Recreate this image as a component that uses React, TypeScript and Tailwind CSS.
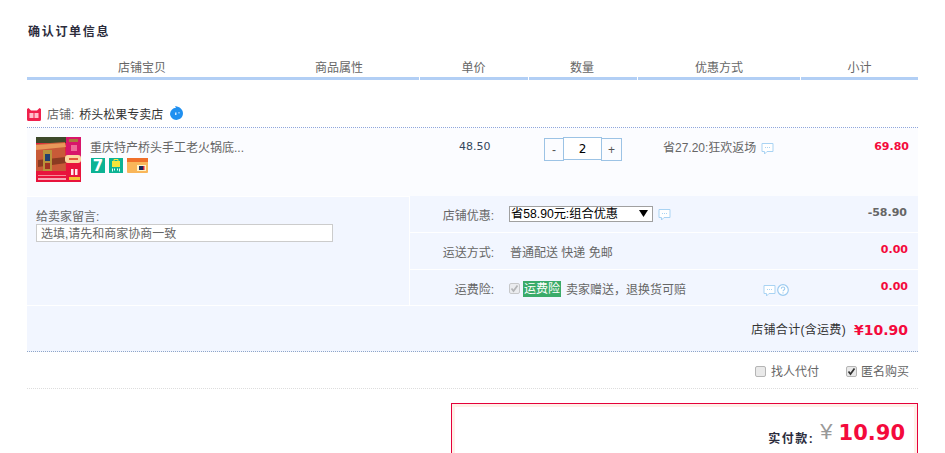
import React from "react";

const cjk = "font-['Liberation_Sans','Noto_Sans_CJK_SC',sans-serif]";
const num = "font-['DejaVu_Sans','Noto_Sans_CJK_SC',sans-serif]";

function Bubble() {
  return (
    <svg width="13" height="13" viewBox="0 0 13 13" className="shrink-0">
      <path d="M1 1.5h11v8H6L3.5 12V9.500H1z" fill="#fff" stroke="#a9d3f3" strokeWidth="1" />
      <path d="M4 5.500h1M6 5.500h1M8 5.500h1" stroke="#a9d3f3" strokeWidth="1" />
    </svg>
  );
}

function Help() {
  return (
    <svg width="12" height="12" viewBox="0 0 12 12" className="shrink-0">
      <circle cx="6" cy="6" r="5.300" fill="#fff" stroke="#9dcbf0" strokeWidth="1.200" />
      <path d="M4.300 4.700c0-2.200 3.500-2.200 3.500 0 0 1.200-1.800 1.300-1.800 2.600M6 8.300v1.200" fill="none" stroke="#9dcbf0" strokeWidth="1.100" />
    </svg>
  );
}

function Check({ checked, dim }: { checked?: boolean; dim?: boolean }) {
  return (
    <span className={`flex h-[11px] w-[11px] shrink-0 items-center justify-center rounded-[2px] border border-[#b5b5b5] bg-[#e9e9e9] ${dim ? "opacity-70" : ""}`}>
      {checked && (
        <svg width="9" height="9" viewBox="0 0 9 9">
          <path d="M1.500 4.500l2 2.500 4-5.500" fill="none" stroke={dim ? "#999" : "#333"} strokeWidth="1.700" />
        </svg>
      )}
    </span>
  );
}

function Thumb() {
  return (
    <svg width="45" height="45" viewBox="0 0 45 45" className="shrink-0">
      <defs>
        <filter id="soft"><feGaussianBlur stdDeviation="0.7" /></filter>
      </defs>
      <rect width="45" height="45" fill="#e8143c" />
      <g filter="url(#soft)">
        <rect x="0" y="0" width="30" height="6" fill="#3d4a2c" />
        <rect x="30" y="0" width="15" height="20" fill="#d8146a" />
        <rect x="33" y="2" width="9" height="3" fill="#a87a3a" />
        <rect x="35" y="8" width="6" height="6" fill="#ee6a98" />
        <path d="M0 7l29-2 1 29H0z" fill="#c85a38" />
        <path d="M0 8l29-2 1 4-30 3z" fill="#e8985a" />
        <path d="M2 23l28-3 0 6-28 4z" fill="#8a3a20" />
        <rect x="7" y="13" width="9" height="21" fill="#b8923a" />
        <rect x="9" y="17" width="5" height="7" fill="#24406e" />
        <rect x="9" y="26" width="5" height="6" fill="#a03020" />
        <rect x="29" y="18" width="16" height="8" rx="3" fill="#fbd8a0" />
        <rect x="33" y="21" width="9" height="2" fill="#e05a3a" />
        <rect x="35" y="32" width="2.500" height="6" fill="#ffe8ec" />
        <rect x="39" y="32" width="2.500" height="6" fill="#ffe8ec" />
        <rect x="33" y="40" width="11" height="3" fill="#f5c030" />
        <rect x="2" y="38" width="28" height="1" fill="#f78a98" />
        <rect x="2" y="41" width="28" height="2" fill="#f7a7b4" />
      </g>
    </svg>
  );
}

export default function App() {
  return (
    <div className={`${cjk} h-[453px] w-[945px] overflow-hidden bg-white px-[27px] text-[12px] leading-[16px] text-[#666]`}>
      <div className="pl-px pt-[24px] text-[12px] font-bold tracking-[1.7px] text-[#2c2c3c]">确认订单信息</div>

      <div className="mt-[18px] flex h-[22px] gap-px text-center text-[#666]">
        <div className="flex w-[392px] gap-[149px] border-b-[3px] border-[#b2cff5] pl-[91px] leading-[20px]">
          <span>店铺宝贝</span>
          <span>商品属性</span>
        </div>
        <div className="w-[108px] border-b-[3px] border-[#b2cff5] pr-px leading-[20px]">单价</div>
        <div className="w-[108px] border-b-[3px] border-[#b2cff5] pr-[2px] leading-[20px]">数量</div>
        <div className="w-[162px] border-b-[3px] border-[#b2cff5] leading-[20px]">优惠方式</div>
        <div className="w-[117px] border-b-[3px] border-[#b2cff5] leading-[20px]">小计</div>
      </div>

      <div className="mt-[24px] flex h-[24px] items-start border-b border-dotted border-[#8fa6dc]">
        <svg width="14" height="13" viewBox="0 0 14 13" className="mt-[4px] shrink-0">
          <path d="M1.500 0l2.500 2.500h6L12.500 0 14 1v10.500a1.500 1.500 0 0 1-1.500 1.500h-11A1.500 1.500 0 0 1 0 11.500V1z" fill="#f0204c" />
          <rect x="2.500" y="5" width="4" height="5" fill="#ffc0cc" />
          <rect x="7.500" y="5" width="4" height="5" fill="#ffc0cc" />
        </svg>
        <span className="ml-[6px] mt-[3px] leading-[16px]">店铺:</span>
        <span className="ml-[5px] mt-[3px] leading-[16px] text-[#333]">桥头松果专卖店</span>
        <svg width="15" height="15" viewBox="0 0 15 15" className="ml-[6px] mt-[2px] shrink-0">
          <path d="M1 8a6.500 6.500 0 0 1 6-6.300L6 0c3 .5 4.500 1.300 5.500 2.300A6.500 6.500 0 1 1 1 8z" fill="#2090f0" />
          <rect x="6" y="6.500" width="1.500" height="2.500" fill="#cfe8ff" />
          <rect x="9.500" y="6" width="1" height="1.500" fill="#cfe8ff" />
        </svg>
      </div>

      <div className="flex h-[68px] bg-[#fbfcff]">
        <div className="flex w-[393px] gap-[9px] pl-[9px] pt-[9px]">
          <Thumb />
          <div>
            <div className="pt-[3px] leading-[16px]">重庆特产桥头手工老火锅底...</div>
            <div className="ml-px mt-[2px] flex gap-[4px]">
              <span className={`${num} flex h-[15px] w-[14px] items-center justify-center bg-[#0cb394] text-[15px] font-bold text-white`}>7</span>
              <svg width="14" height="15" viewBox="0 0 14 15">
                <rect width="14" height="15" fill="#0cb394" />
                <rect x="3" y="3" width="8" height="6" fill="#f6e53a" />
                <path d="M5 3V1.500h4V3" fill="none" stroke="#f6e53a" />
                <path d="M3.500 10.500v3M10.500 10.500v3M5.500 10.500v2M8.500 10.500v2" stroke="#e8fff8" />
              </svg>
              <svg width="21" height="15" viewBox="0 0 21 15">
                <rect width="21" height="15" rx="1" fill="#f9b65a" />
                <rect width="21" height="4" fill="#f0702a" />
                <rect x="10" y="7" width="9" height="6" fill="#fff3c8" />
                <rect x="12" y="8" width="5" height="4" fill="#1a2a5a" />
                <rect x="16" y="8" width="1.500" height="4" fill="#d02040" />
              </svg>
            </div>
          </div>
        </div>
        <div className={`${num} w-[108px] pt-[11px] pl-[39px] text-[11px] text-[#34465c]`}>48.50</div>
        <div className="flex w-[110px] items-start pl-[16px] pt-[9px]">
          <span className="mt-px flex h-[23px] w-[20px] items-center justify-center border border-[#9cc3e5] text-[#555]">-</span>
          <span className={`${num} -ml-px flex h-[23px] w-[39px] items-center justify-center border border-[#9cc3e5] bg-white text-[12px] text-black`}>2</span>
          <span className="mt-px -ml-px flex h-[23px] w-[21px] items-center justify-center border border-[#9cc3e5] text-[#555]">+</span>
        </div>
        <div className="flex w-[161px] items-start gap-[5px] pl-[25px] pt-[12px]">
          <span>省27.20:狂欢返场</span>
          <span className="mt-[2px]"><Bubble /></span>
        </div>
        <div className={`${num} flex-1 pr-[9px] pt-[11px] text-right text-[11px] font-bold text-[#f40a3c]`}>69.80</div>
      </div>

      <div className="flex">
        <div className="mt-px h-[108px] w-[382px] bg-[#f2f6ff] pl-[9px] pt-[12px]">
          <div className="leading-[16px]">给卖家留言:</div>
          <input
            readOnly
            placeholder="选填,请先和商家协商一致"
            className="-mt-px block h-[18px] w-[297px] border border-[#ccc] bg-white px-[4px] pt-px text-[12px] leading-[16px] placeholder:text-[#666]"
          />
        </div>
        <div className="ml-px flex flex-1 flex-col gap-px">
          <div className="flex h-[36px] bg-[#f2f6ff]">
            <div className="w-[84px] pt-[12px] text-right">店铺优惠:</div>
            <div className="ml-[15px] mt-[10px] flex h-[16px] items-start gap-[5px]">
              <div className="relative">
                <select className="block h-[16px] w-[144px] appearance-none rounded-none border border-[#a0a0a0] bg-white pl-px text-[12.2px] leading-[14px] text-black">
                  <option>省58.90元:组合优惠</option>
                </select>
                <svg width="9" height="7" viewBox="0 0 9 7" className="absolute right-[5px] top-[4px]">
                  <path d="M0 0h9L4.500 7z" fill="#000" />
                </svg>
              </div>
              <span className="mt-[2px]"><Bubble /></span>
            </div>
            <div className={`${num} flex-1 pr-[11px] pt-[9px] text-right text-[11px] font-bold text-[#666]`}>-58.90</div>
          </div>
          <div className="flex h-[36px] bg-[#f2f6ff]">
            <div className="w-[84px] pt-[12px] text-right">运送方式:</div>
            <div className="ml-[16px] pt-[12px]">普通配送 快递 免邮</div>
            <div className={`${num} flex-1 pr-[10px] pt-[9px] text-right text-[11px] font-bold text-[#f40a3c]`}>0.00</div>
          </div>
          <div className="flex h-[35px] bg-[#f2f6ff]">
            <div className="w-[84px] pt-[12px] text-right">运费险:</div>
            <div className="ml-[15px] flex w-[280px] items-start pt-[12px]">
              <span className="mt-px"><Check checked dim /></span>
              <span className="-mt-px ml-[3px] h-[16px] bg-[#3aab6a] px-px text-white">运费险</span>
              <span className="ml-[5px]">卖家赠送，退换货可赔</span>
              <span className="ml-auto mt-[2px] flex gap-px"><Bubble /><Help /></span>
            </div>
            <div className={`${num} flex-1 pr-[10px] pt-[9px] text-right text-[11px] font-bold text-[#f40a3c]`}>0.00</div>
          </div>
        </div>
      </div>

      <div className="mt-px flex h-[46px] items-center justify-end border-b border-dotted border-[#8fa6c8] bg-[#f2f6ff] pt-[2px] pr-[10px]">
        <span className="tracking-[0.3px] text-[#333]">店铺合计(含运费)</span>
        <span className={`${num} ml-[8px] text-[14px] font-bold text-[#f40a3c]`}>¥10.90</span>
      </div>

      <div className="flex h-[37px] items-center justify-end gap-[27px] border-b border-dotted border-[#ddd] pr-[9px] pt-[3px]">
        <span className="flex items-center gap-[5px]"><Check />找人代付</span>
        <span className="flex items-center gap-[4px]"><Check checked />匿名购买</span>
      </div>

      <div className="ml-auto mt-[14px] h-[120px] w-[467px] border border-[#e4003a]">
        <div className="h-full border-[3px] border-[#fff0e8] pr-[9px] pt-[12px]">
          <div className="flex items-start justify-end">
            <span className="mt-[12px] font-bold tracking-[1.5px] text-[#2c2c3c]">实付款:</span>
            <span className="ml-[6px] mt-[-2px] text-[22px] font-medium leading-[30px] text-[#999]">¥</span>
            <span className={`${num} ml-[6px] text-[21px] font-bold leading-[28px] text-[#f40a3c]`}>10.90</span>
          </div>
        </div>
      </div>
    </div>
  );
}
